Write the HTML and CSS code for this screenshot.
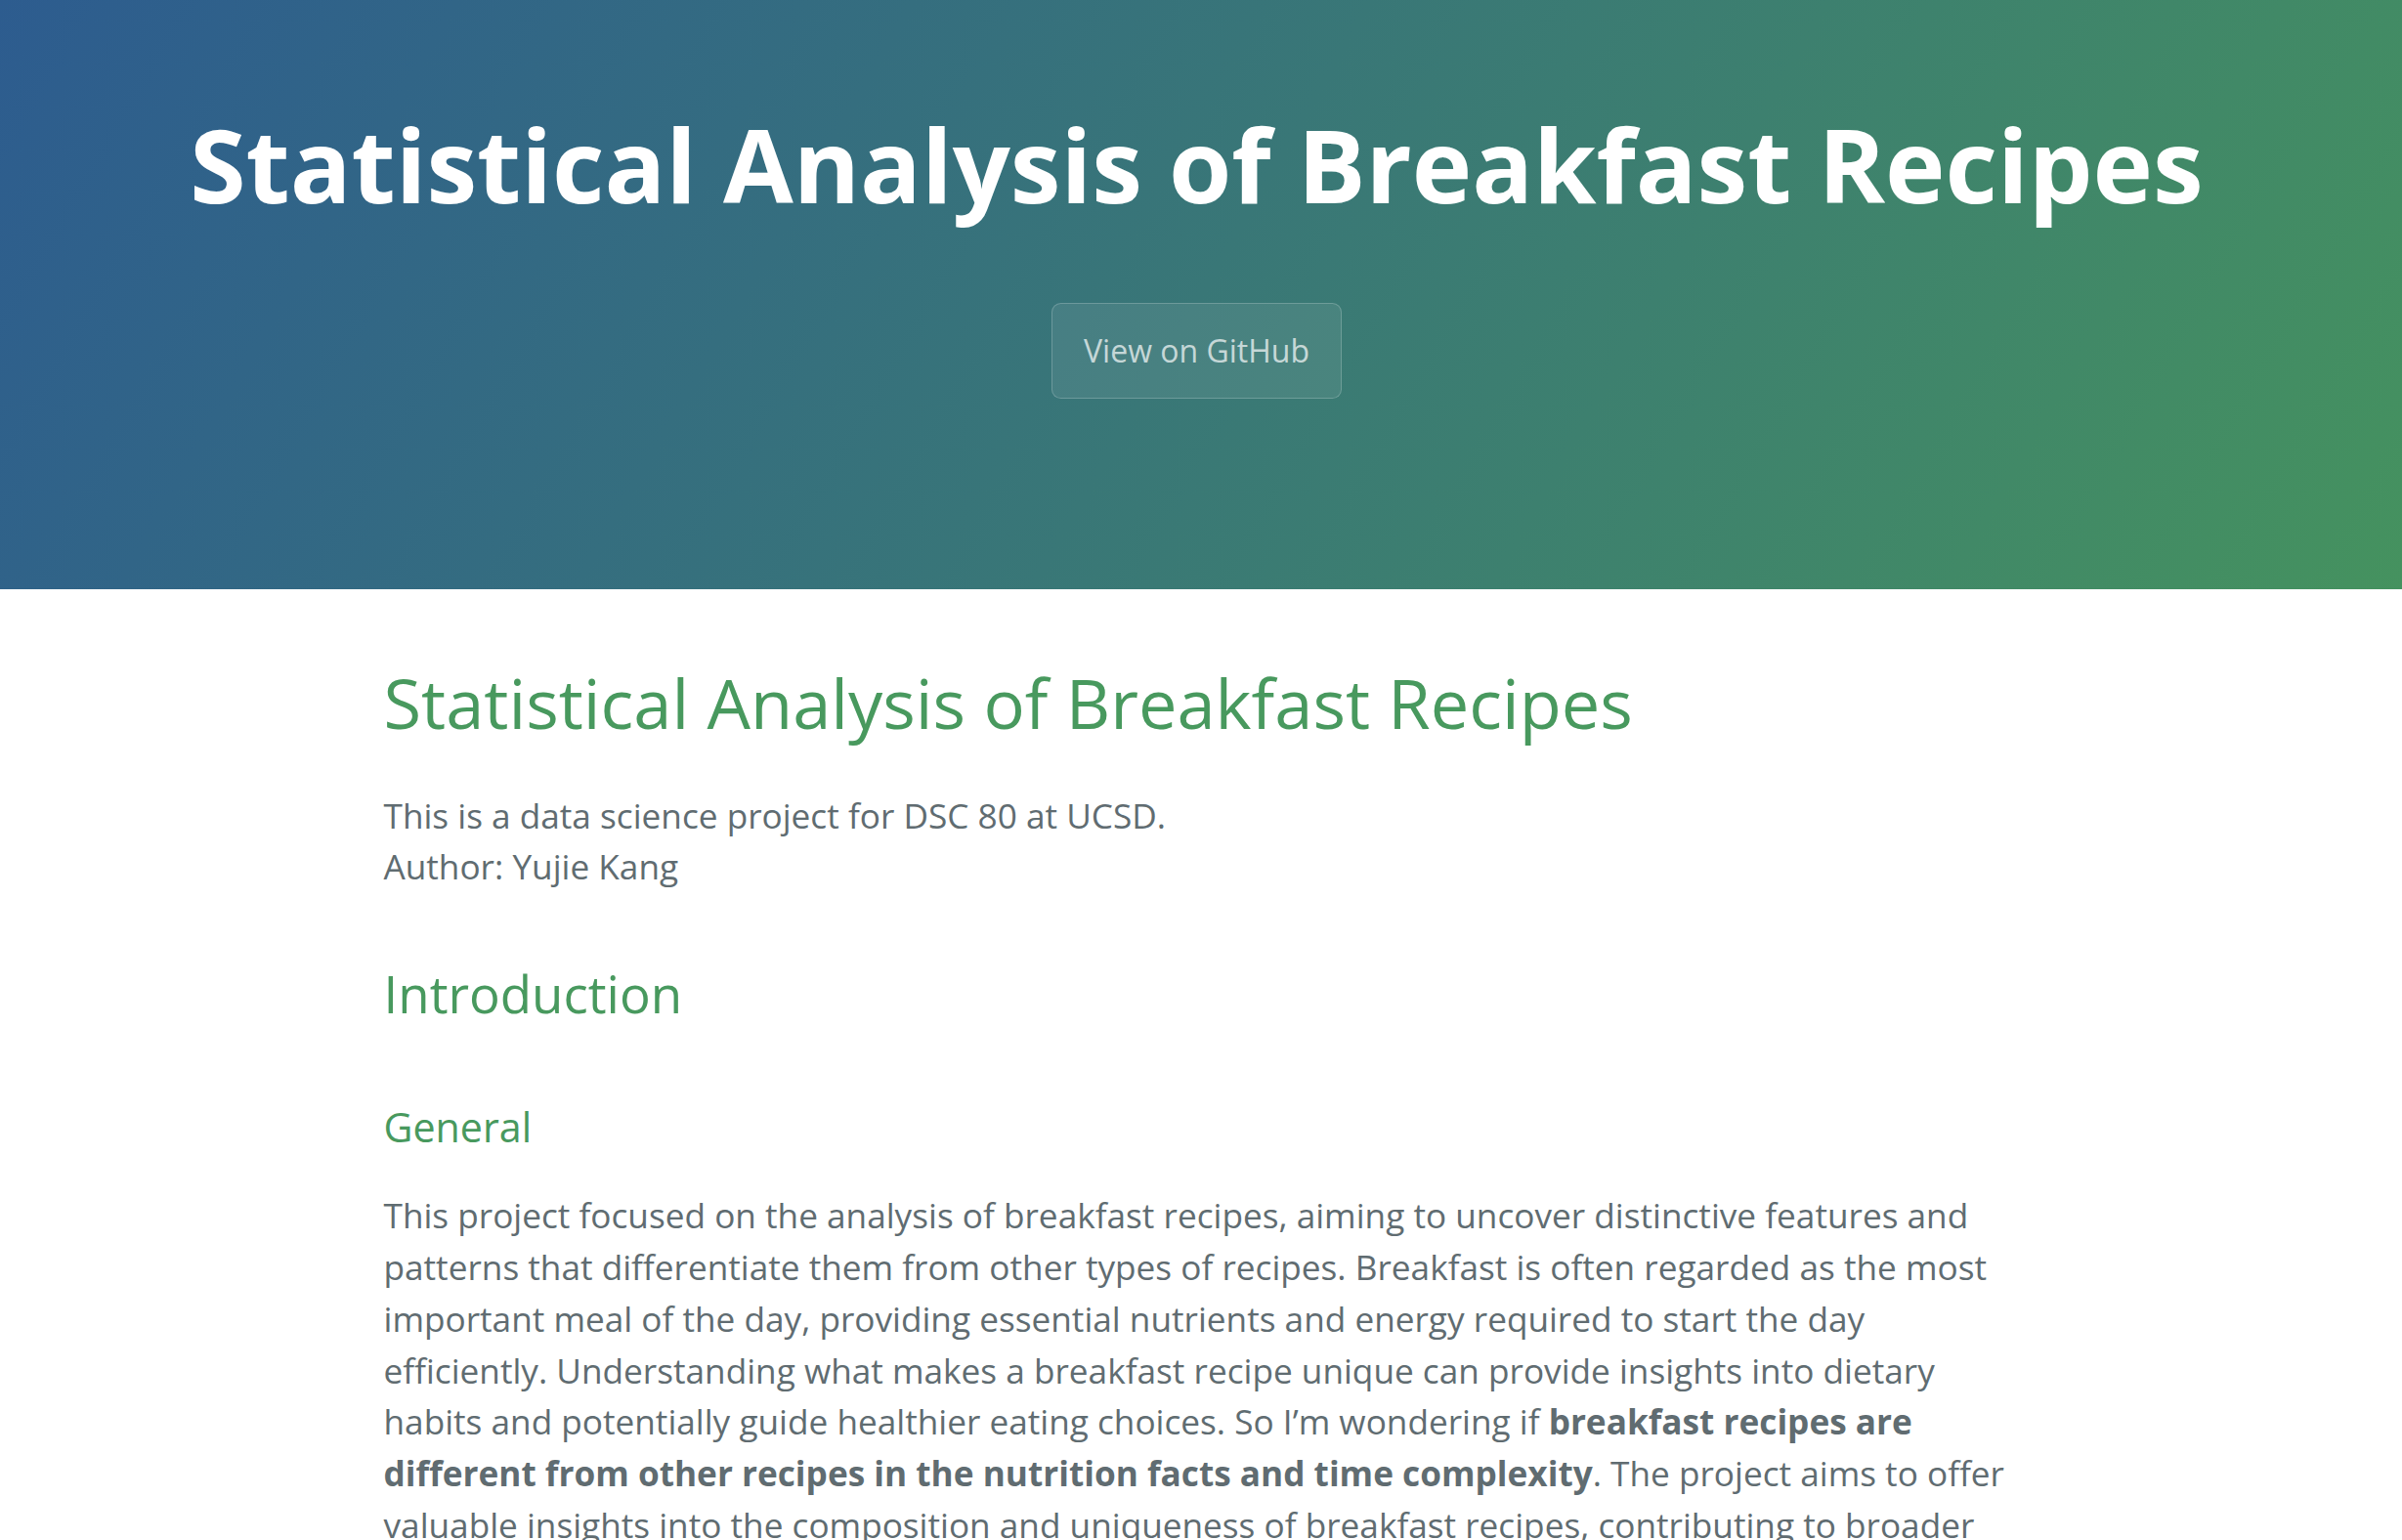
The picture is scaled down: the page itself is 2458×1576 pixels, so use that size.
FILE: index.html
```html
<!DOCTYPE html>
<html lang="en">
<head>
<meta charset="utf-8">
<title>Statistical Analysis of Breakfast Recipes</title>
<link rel="stylesheet" href="styles.css">
</head>
<body>
<header class="page-header">
  <h1 class="project-name">Statistical Analysis of Breakfast Recipes</h1>
  <a class="btn" href="#">View on GitHub</a>
</header>
<main class="main-content">
  <h1 class="doc-title">Statistical Analysis of Breakfast Recipes</h1>
  <p>This is a data science project for DSC 80 at UCSD.<br>Author: Yujie Kang</p>
  <h2 class="sec">Introduction</h2>
  <h3 class="sub">General</h3>
  <p>This project focused on the analysis of breakfast recipes, aiming to uncover distinctive features and patterns that differentiate them from other types of recipes. Breakfast is often regarded as the most important meal of the day, providing essential nutrients and energy required to start the day efficiently. Understanding what makes a breakfast recipe unique can provide insights into dietary habits and potentially guide healthier eating choices. So I’m wondering if <strong>breakfast recipes are different from other recipes in the nutrition facts and time complexity</strong>. The project aims to offer valuable insights into the composition and uniqueness of breakfast recipes, contributing to broader understanding of dietary patterns and culinary practices.</p>
</main>
</body>
</html>
```

FILE: styles.css
```css
* { box-sizing: border-box; }

html, body {
  margin: 0;
  padding: 0;
}

body {
  font-family: "Open Sans", "Helvetica Neue", Helvetica, Arial, sans-serif;
  font-size: 32px;
  line-height: 1.5;
  color: #606c71;
  background: #fff;
}

.page-header {
  color: #fff;
  text-align: center;
  background-color: #3b7a75;
  background-image: linear-gradient(120deg, #2d5c8f, #45925f);
  padding: 90px 201px 163px 192px;
}

.project-name {
  margin: 0 0 64px;
  font-size: 104px;
  font-weight: 700;
  line-height: 156px;
}

.btn {
  display: inline-block;
  margin-bottom: 32px;
  padding: 24px 32px;
  color: rgba(255, 255, 255, 0.7);
  background-color: rgba(255, 255, 255, 0.08);
  border: 1px solid rgba(255, 255, 255, 0.2);
  border-radius: 9.6px;
  text-decoration: none;
  font-size: 32px;
  line-height: 48px;
}

.main-content {
  max-width: 2048px;
  margin: 0 calc(50% - 1024px + 4.5px) 0 calc(50% - 1024px - 4.5px);
  padding: 64px 192px;
  font-size: 35.2px;
  line-height: 1.5;
  word-wrap: break-word;
}

.main-content h1,
.main-content h2,
.main-content h3 {
  margin-top: 64px;
  margin-bottom: 32px;
  font-weight: normal;
  color: #48995e;
  line-height: 1.5;
}

.main-content .doc-title {
  margin-top: 0;
  margin-bottom: 35px;
  font-size: 70.4px;
}

.main-content .sec {
  font-size: 52.8px;
}

.main-content .sub {
  margin-top: 67px;
  font-size: 41.2px;
}

.main-content p {
  margin-top: 0;
  margin-bottom: 35.2px;
}

.main-content .sub + p {
  margin-top: 2px;
}

.main-content strong {
  font-weight: 700;
}
```
